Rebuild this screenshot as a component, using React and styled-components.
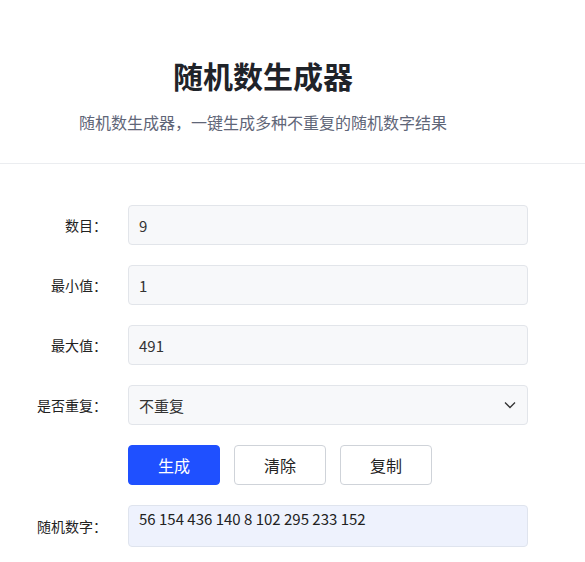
import React from 'react'
import styled, { createGlobalStyle } from 'styled-components'

const GlobalStyle = createGlobalStyle`
  body {
    margin: 0;
    background: #fff;
    font-family: "Noto Sans CJK SC", "Noto Sans", sans-serif;
    color: #333;
  }
`

const Header = styled.header`
  width: 526px;
  padding: 54px 0 29px;
  text-align: center;
`

const Title = styled.h1`
  margin: 0;
  font-size: 30px;
  line-height: 42px;
  font-weight: 700;
  color: #1f2329;
`

const Subtitle = styled.p`
  margin: 14px 0 0;
  font-size: 16px;
  line-height: 24px;
  color: #5f6678;
`

const Divider = styled.hr`
  margin: 0;
  border: 0;
  border-top: 1px solid #ebedf0;
`

const Form = styled.div`
  display: flex;
  flex-direction: column;
  gap: 20px;
  padding-top: 41px;
`

const Row = styled.div`
  display: flex;
  align-items: center;
  height: ${(p) => p.h || 40}px;
`

const Label = styled.div`
  width: 107px;
  padding-right: 21px;
  text-align: right;
  font-size: 14px;
  color: #222;
  flex-shrink: 0;
`

const Field = styled.div`
  box-sizing: border-box;
  width: 400px;
  height: 40px;
  padding: 0 11px 0 10px;
  display: flex;
  align-items: center;
  justify-content: space-between;
  background: #f7f8fa;
  border: 1px solid #e2e5ea;
  border-radius: 4px;
  font-size: 15px;
  color: #333;
`

const Buttons = styled.div`
  display: flex;
  gap: 14px;
  margin-left: 128px;
`

const Button = styled.button`
  box-sizing: border-box;
  width: 92px;
  height: 40px;
  border-radius: 4px;
  font-family: inherit;
  font-size: 16px;
  cursor: pointer;
  border: 1px solid ${(p) => (p.primary ? '#1f50ff' : '#cfd3d9')};
  background: ${(p) => (p.primary ? '#1f50ff' : '#fff')};
  color: ${(p) => (p.primary ? '#fff' : '#222')};
`

const Result = styled.div`
  box-sizing: border-box;
  width: 400px;
  height: 42px;
  padding: 3px 10px;
  background: #eef2fd;
  border: 1px solid #dfe4ee;
  border-radius: 4px;
  font-size: 15px;
  line-height: 20px;
  color: #222;
`

const Chevron = () => (
  <svg width="12" height="8" viewBox="0 0 12 8" fill="none" stroke="#333" strokeWidth="1.3">
    <path d="M1 1.5 6 6.5 11 1.5" />
  </svg>
)

export default function App() {
  return (
    <>
      <GlobalStyle />
      <Header>
        <Title>随机数生成器</Title>
        <Subtitle>随机数生成器，一键生成多种不重复的随机数字结果</Subtitle>
      </Header>
      <Divider />
      <Form>
        <Row>
          <Label>数目：</Label>
          <Field>9</Field>
        </Row>
        <Row>
          <Label>最小值：</Label>
          <Field>1</Field>
        </Row>
        <Row>
          <Label>最大值：</Label>
          <Field>491</Field>
        </Row>
        <Row>
          <Label>是否重复：</Label>
          <Field>
            不重复
            <Chevron />
          </Field>
        </Row>
        <Buttons>
          <Button primary>生成</Button>
          <Button>清除</Button>
          <Button>复制</Button>
        </Buttons>
        <Row h={42}>
          <Label>随机数字：</Label>
          <Result>56 154 436 140 8 102 295 233 152</Result>
        </Row>
      </Form>
    </>
  )
}
